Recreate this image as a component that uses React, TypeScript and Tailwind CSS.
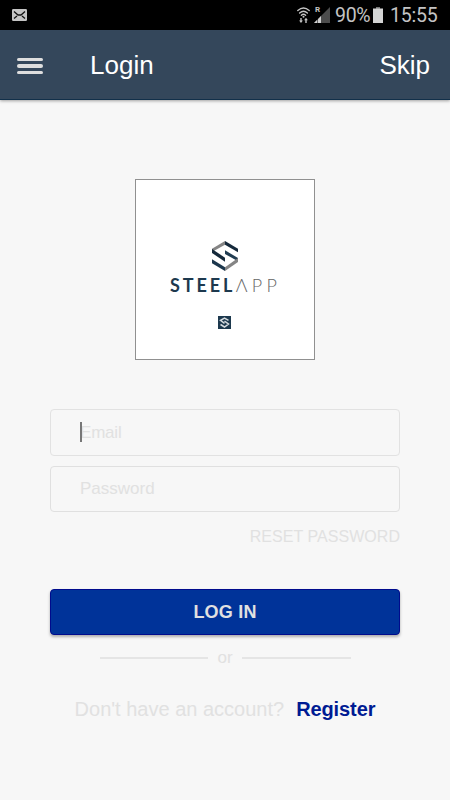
import React from "react";

function StatusBar() {
  return (
    <div className="flex h-[30px] items-center bg-black pr-[12px] pl-[12px] font-['Roboto',sans-serif] text-[#c4c4c4]">
      <svg width="15" height="12" viewBox="0 0 15 12" className="block">
        <rect width="15" height="12" rx="1.2" fill="#c4c4c4" />
        <path d="M2 2.5 L6 6 H9 L13 2.5 M2 9.5 L5 7 M13 9.5 L10 7" fill="none" stroke="#111" strokeWidth="1.3" />
      </svg>
      <svg width="13" height="17" viewBox="0 0 13 17" className="ml-auto block">
        <g fill="none" stroke="#c4c4c4" strokeWidth="1.4" strokeLinecap="round">
          <path d="M.8 3.6 Q6.5 -1.6 12.2 3.6" />
          <path d="M2.6 6 Q6.5 2.4 10.4 6" />
          <path d="M4.4 8.2 Q6.5 6.4 8.6 8.2" />
        </g>
        <circle cx="6.5" cy="9.8" r="1" fill="#c4c4c4" />
        <path d="M3.3 11h1.4v2.4h1.2L4 16 2.1 13.4h1.2zM8.3 16V13.2H7.1L9 10.8l1.9 2.4H9.7V16z" fill="#c4c4c4" />
      </svg>
      <div className="relative ml-[4px] h-[17px] w-[16px]">
        <svg width="16" height="17" viewBox="0 0 16 17" className="block">
          <path d="M0 16 L16 0 V16 Z" fill="#4c4c4c" />
          <path d="M0 16 L3.2 12.8 V16 Z M4 16 V12 L7 9 V16 Z" fill="#d0d0d0" />
        </svg>
        <span className="absolute -top-[1px] left-[1px] bg-black text-[8px] leading-[8px] font-bold">R</span>
      </div>
      <span className="ml-[5px] mt-[2px] w-[38px] text-[19.5px] leading-[30px] tracking-[-0.3px] whitespace-nowrap">90%</span>
      <svg width="10" height="16" viewBox="0 0 10 16" className="block">
        <path d="M3 0h4v1.5h3V16H0V1.5h3z" fill="#d4d4d4" />
        <path d="M3 0h4v1.5H3z" fill="#777" />
      </svg>
      <span className="mt-[2px] ml-[7px] w-[48px] text-[19.5px] leading-[30px] tracking-[-0.2px] whitespace-nowrap">15:55</span>
    </div>
  );
}

function Header() {
  return (
    <header className="flex h-[70px] items-center border-b border-[#12304a] bg-[#34475b] pr-[20px] pl-[17px] text-[26px] text-white shadow-[0_1px_3px_rgba(0,0,0,0.35)]">
      <div className="mt-[2px] flex w-[26px] flex-col gap-[3px]">
        <span className="h-[3px] rounded-full bg-[#dedede]" />
        <span className="h-[4px] rounded-full bg-[#dedede]" />
        <span className="h-[3px] rounded-full bg-[#dedede]" />
      </div>
      <h1 className="mt-[1px] ml-[47px]">Login</h1>
      <span className="mt-[1px] ml-auto">Skip</span>
    </header>
  );
}

function Emblem() {
  return (
    <svg width="26" height="30" viewBox="0 0 78 90" className="mr-[1px] block">
      <path d="M39 0 L0 23 V33 L39 11 Z" fill="#858585" />
      <path d="M39 0 L78 23 V34 L39 11 Z" fill="#15293b" />
      <path d="M0 24 L39 50 V62 L0 36 Z" fill="#15293b" />
      <path d="M39 28 L78 51 V61 L39 39 Z" fill="#213d52" />
      <path d="M78 51 V63 L39 90 V79 Z" fill="#858585" />
      <path d="M0 55 L39 79 V90 L0 67 Z" fill="#1c374d" />
    </svg>
  );
}

function Logo() {
  return (
    <div className="flex h-[181px] w-[180px] flex-col items-center border border-[#909090] bg-white pt-[61px]">
      <Emblem />
      <div className="mt-[6px] flex h-[18px] w-[112px] font-['Lato',sans-serif] text-[18px] leading-[17px] whitespace-nowrap">
        <span className="w-[68px] pl-[1px] font-bold tracking-[2.9px] text-[#1d394e]">STEEL</span>
        <span className="font-light tracking-[4.2px] text-[#666]">ΛPP</span>
      </div>
      <svg width="13" height="13" viewBox="0 0 13 13" className="mt-[21px] mr-[1px] block">
        <rect width="13" height="13" fill="#1d394e" />
        <path d="M10.5 4.3 L6.5 2 L2.5 4.3 L6.5 7.3 M6.5 5.2 L10.5 8 L6.5 11 L2.5 8.5" fill="none" stroke="#d5dbdf" strokeWidth="1.5" />
      </svg>
    </div>
  );
}

export default function App() {
  return (
    <div className="flex h-[800px] w-[450px] flex-col overflow-hidden bg-[#f7f7f7] font-['Liberation_Sans',Arial,sans-serif]">
      <StatusBar />
      <Header />
      <main className="flex flex-col items-center px-[50px] pt-[79px] text-[#e1e1e1]">
        <Logo />
        <div className="mt-[49px] flex h-[47px] w-full items-center rounded-[4px] border-x border-y-[1.5px] border-[#e2e2e2] pl-[29px] text-[17px]">
          <div className="relative tracking-[-0.2px]">
            Email
            <span className="absolute top-[2px] left-0 h-[20px] w-[2px] bg-[#777]" />
          </div>
        </div>
        <div className="mt-[10px] flex h-[46px] w-full items-center rounded-[4px] border border-[#e0e0e0] pl-[29px] text-[17px]">
          Password
        </div>
        <div className="mt-[14px] self-end text-[16px] leading-[22px] tracking-[0.05px]">RESET PASSWORD</div>
        <button className="mt-[41px] h-[46px] w-full rounded-[4px] border border-[#000b8d] bg-[#003399] text-[18px] font-bold tracking-[0.2px] text-[#e1e1e1] shadow-[0_2px_3px_rgba(0,0,0,0.3)]">
          LOG IN
        </button>
        <div className="mt-[13px] flex h-[20px] w-[251px] items-center gap-[9px] text-[17px]">
          <span className="h-[2px] flex-1 bg-[#e5e5e5]" />
          <span>or</span>
          <span className="h-[2px] flex-1 bg-[#e5e5e5]" />
        </div>
        <div className="mt-[29px] flex h-[24px] items-center gap-[12px] text-[20px] whitespace-nowrap">
          <span>Don't have an account?</span>
          <span className="font-bold tracking-[-0.1px] text-[#001b93]">Register</span>
        </div>
      </main>
    </div>
  );
}
